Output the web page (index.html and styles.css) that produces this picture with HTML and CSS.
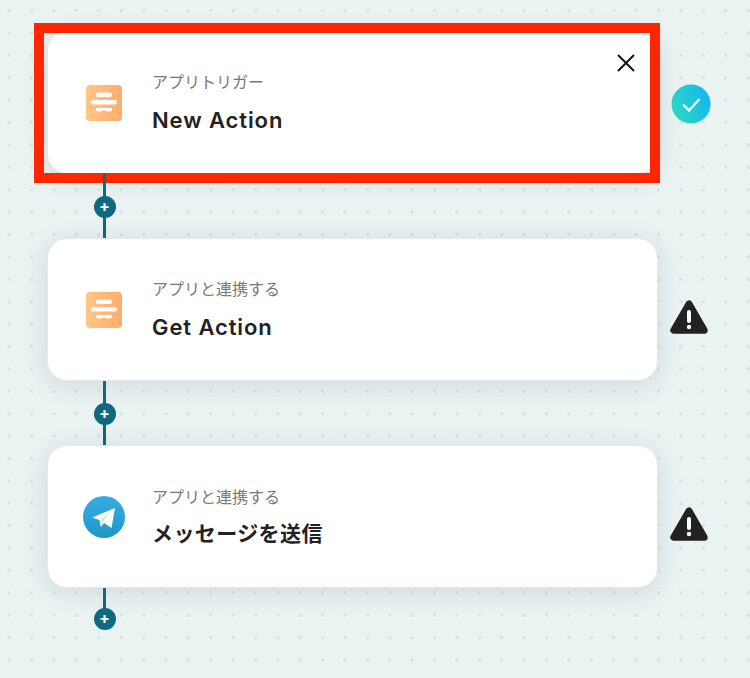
FILE: index.html
```html
<!DOCTYPE html>
<html lang="ja">
<head>
<meta charset="UTF-8" />
<title>フロー</title>
<link rel="stylesheet" href="styles.css">
</head>
<body>
<div class="flow">

  <div class="step">
    <div class="card card-selected">
      <svg class="app-icon" viewBox="0 0 36 36" aria-hidden="true">
        <defs>
          <linearGradient id="orange1" x1="0" y1="0" x2="1" y2="0">
            <stop offset="0" stop-color="#ffc587"/>
            <stop offset="1" stop-color="#ffad6c"/>
          </linearGradient>
        </defs>
        <rect width="36" height="36" rx="4" fill="url(#orange1)"/>
        <rect x="10" y="7.5" width="16" height="4.5" rx="2.25" fill="#fff"/>
        <rect x="5" y="15" width="26" height="4.5" rx="2.25" fill="#fff"/>
        <path d="M10 23h16v1a2.500 2.500 0 0 1-2.500 2.500h-2a2 2 0 0 1-1.500-1h-4a2 2 0 0 1-1.500 1h-2a2.500 2.500 0 0 1-2.500-2.500z" fill="#fff"/>
      </svg>
      <div class="card-text">
        <p class="card-label">アプリトリガー</p>
        <p class="card-title">New Action</p>
      </div>
      <svg class="close-icon" viewBox="0 0 18 18" aria-hidden="true">
        <path d="M1 1l16 16M17 1L1 17" stroke="#111" stroke-width="2" fill="none"/>
      </svg>
      <div class="selected-frame"></div>
    </div>
    <svg class="status-icon" viewBox="0 0 40 40" aria-hidden="true">
      <defs>
        <linearGradient id="okGrad" x1="0" y1="0.7" x2="1" y2="0.3">
          <stop offset="0" stop-color="#2ed8c3"/>
          <stop offset="1" stop-color="#10b8ee"/>
        </linearGradient>
      </defs>
      <circle cx="20" cy="20" r="19.500" fill="url(#okGrad)"/>
      <path d="M12 20.500l6 6 10.500-11.500" stroke="#fff" stroke-width="2.400" fill="none"/>
    </svg>
  </div>

  <div class="connector"><span class="add-btn">+</span></div>

  <div class="step">
    <div class="card">
      <svg class="app-icon" viewBox="0 0 36 36" aria-hidden="true">
        <rect width="36" height="36" rx="4" fill="url(#orange1)"/>
        <rect x="10" y="7.5" width="16" height="4.5" rx="2.25" fill="#fff"/>
        <rect x="5" y="15" width="26" height="4.5" rx="2.25" fill="#fff"/>
        <path d="M10 23h16v1a2.500 2.500 0 0 1-2.500 2.500h-2a2 2 0 0 1-1.500-1h-4a2 2 0 0 1-1.500 1h-2a2.500 2.500 0 0 1-2.500-2.500z" fill="#fff"/>
      </svg>
      <div class="card-text">
        <p class="card-label">アプリと連携する</p>
        <p class="card-title">Get Action</p>
      </div>
    </div>
    <svg class="status-icon warn" viewBox="0 0 38 34" aria-hidden="true">
      <path d="M19 4L3.800 30.200h30.400z" fill="#222" stroke="#222" stroke-width="7" stroke-linejoin="round"/>
      <rect x="17" y="10" width="4" height="13" rx="2" fill="#fff"/>
      <circle cx="19" cy="27" r="2.200" fill="#fff"/>
    </svg>
  </div>

  <div class="connector"><span class="add-btn">+</span></div>

  <div class="step">
    <div class="card">
      <svg class="app-icon telegram" viewBox="0 0 42 42" aria-hidden="true">
        <defs>
          <linearGradient id="tgGrad" x1="0" y1="0" x2="0" y2="1">
            <stop offset="0" stop-color="#37aee2"/>
            <stop offset="1" stop-color="#1e96c8"/>
          </linearGradient>
        </defs>
        <circle cx="21" cy="21" r="21" fill="url(#tgGrad)"/>
        <path d="M9 21.500l23-9.500-3.500 20-7.500-5-3.500 3.500-1-6.500z" fill="#fff"/>
        <path d="M17 24.500l1 6.500 3-3.800z" fill="#d2e5f1"/>
        <path d="M16.500 24.500L28 15.500l-8 9.500 1 2z" fill="#d2e5f1"/>
      </svg>
      <div class="card-text">
        <p class="card-label">アプリと連携する</p>
        <p class="card-title card-title-ja">メッセージを送信</p>
      </div>
    </div>
    <svg class="status-icon warn" viewBox="0 0 38 34" aria-hidden="true">
      <path d="M19 4L3.800 30.200h30.400z" fill="#222" stroke="#222" stroke-width="7" stroke-linejoin="round"/>
      <rect x="17" y="10" width="4" height="13" rx="2" fill="#fff"/>
      <circle cx="19" cy="27" r="2.200" fill="#fff"/>
    </svg>
  </div>

  <div class="connector connector-end"><span class="add-btn">+</span></div>

</div>
</body>
</html>
```

FILE: styles.css
```css
* {
  box-sizing: border-box;
}
body {
  margin: 0;
  height: 678px;
  overflow: hidden;
  font-family: Inter, "Noto Sans CJK JP", sans-serif;
  color: #222;
  background-color: #eaf2f2;
  background-image: radial-gradient(circle, #d8e2e2 1.4px, transparent 1.9px);
  background-size: 22.4px 22.4px;
  background-position: -2px -0.6px;
}
.flow {
  padding: 31px 0 0 47px;
}
.step {
  display: flex;
  align-items: center;
  gap: 12px;
}
.card {
  position: relative;
  width: 611px;
  height: 143px;
  display: flex;
  align-items: center;
  padding-left: 38px;
  gap: 30px;
  background: #fff;
  border: 1px solid #e3e9e9;
  border-radius: 20px;
  box-shadow: 0 4px 24px rgba(30, 60, 60, 0.12);
}
.app-icon {
  width: 36px;
  height: 36px;
  flex: none;
  margin-top: 1px;
}
.app-icon.telegram {
  width: 42px;
  height: 42px;
  margin: 1px -3px 0 -3px;
}
.card-label {
  margin: 0 0 12px;
  font-size: 16px;
  line-height: 22px;
  color: #777;
}
.card-title {
  margin: 0;
  font-size: 22px;
  line-height: 30px;
  font-weight: 600;
  letter-spacing: 0.9px;
  color: #222;
}
.card-title-ja {
  font-size: 21px;
  letter-spacing: 0.4px;
  margin-top: -1px;
}
.card-text {
  margin-top: 1px;
}
.close-icon {
  position: absolute;
  top: 22px;
  right: 22px;
  width: 18px;
  height: 18px;
}
.selected-frame {
  position: absolute;
  left: -14px;
  top: -9px;
  width: 626px;
  height: 160px;
  border: 10px solid #ff2600;
}
.status-icon {
  width: 40px;
  height: 40px;
  flex: none;
  margin-top: 2px;
  margin-left: 1px;
}
.status-icon.warn {
  width: 38px;
  height: 34px;
  margin-top: 15px;
  margin-left: 0;
}
.connector {
  position: relative;
  width: 3px;
  height: 64px;
  margin-left: 56px;
  background: #0d6a80;
}
.connector-end {
  height: 24px;
}
.add-btn {
  position: absolute;
  left: -9.500px;
  top: 22px;
  width: 22px;
  height: 22px;
  border-radius: 50%;
  background: #0d6a80;
  color: #fff;
  font-size: 16px;
  font-weight: 700;
  line-height: 21px;
  text-align: center;
}
.connector-end .add-btn {
  top: 20px;
}
```
